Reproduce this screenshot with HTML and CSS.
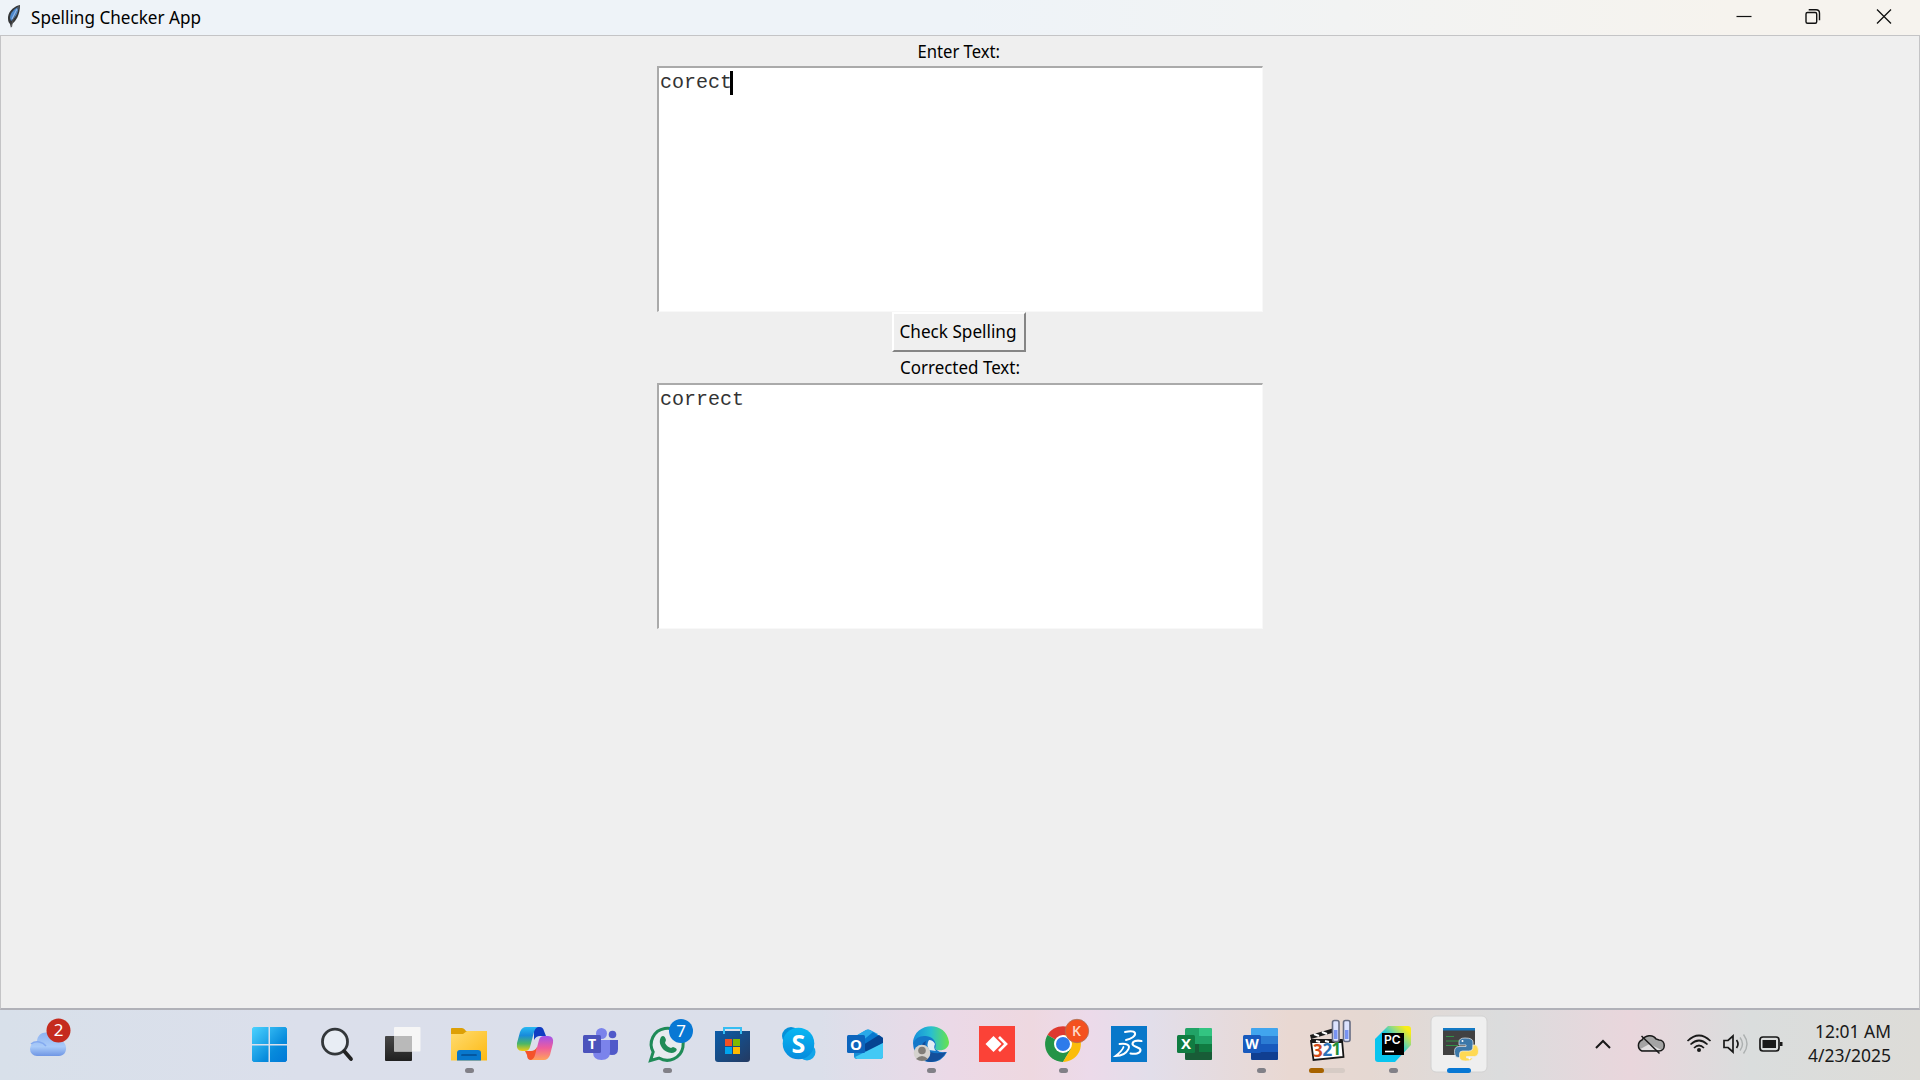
FILE: index.html
```html
<!DOCTYPE html>
<html lang="en">
<head>
<meta charset="utf-8">
<title>Spelling Checker App</title>
<link rel="stylesheet" href="styles.css">
</head>
<body>
<header class="titlebar">
  <svg class="feather" width="16" height="26" viewBox="0 0 16 26"><path d="M13 1C8 2 2 6 1 13c0 3 0 5 2 7l1 4 1-4c4-3 8-9 8-19z" fill="#343638"/><path d="M11.500 3C7 5 3 9 3 14l1 3c4-3 7-7 7.500-14z" fill="#4d88cb"/><path d="M12 2C8 9 6 14 4.500 23" stroke="#555" fill="none"/><path d="M10 5L5 15" stroke="#8fbaf0" stroke-width="1.300"/></svg>
  <svg class="title" width="176" height="35"><text x="2" y="24" textLength="170" lengthAdjust="spacingAndGlyphs">Spelling Checker App</text></svg>
  <div class="controls">
    <svg width="70" height="35" viewBox="0 0 70 35"><path d="M26.500 16.500h15" stroke="#111" stroke-width="1.200"/></svg>
    <svg width="70" height="35" viewBox="0 0 70 35" fill="none" stroke="#111" stroke-width="1.400"><rect x="26" y="12.500" width="10.700" height="10.700" rx="1.500"/><path d="M28.700 9.700h7.300q3.500 0 3.500 3.500v7"/></svg>
    <svg width="70" height="35" viewBox="0 0 70 35"><path d="M27 9.500l14 14M41 9.500l-14 14" stroke="#111" stroke-width="1.300"/></svg>
  </div>
</header>
<main class="window">
  <svg class="label label-top" width="160" height="30"><text x="37.500" y="21.500" textLength="82.500" lengthAdjust="spacingAndGlyphs">Enter Text:</text></svg>
  <div class="textbox"><span>corect</span><i class="caret"></i></div>
  <div class="button"><svg width="129" height="36"><text x="5.500" y="24" textLength="117" lengthAdjust="spacingAndGlyphs">Check Spelling</text></svg></div>
  <svg class="label label-result" width="160" height="31"><text x="20" y="22" textLength="120" lengthAdjust="spacingAndGlyphs">Corrected Text:</text></svg>
  <div class="textbox"><span>correct</span></div>
</main>
<footer class="taskbar">
  <svg class="weather" width="236" height="70" viewBox="0 0 236 70">
    <defs><linearGradient id="cl" x2="0" y2="1"><stop stop-color="#8fb4f1"/><stop offset=".6" stop-color="#a9cbf9"/><stop offset="1" stop-color="#6f96e4"/></linearGradient></defs>
    <path d="M37 46a7 7 0 0 1 0-14C37 21 50 20 54 27l5 3c9.500 1 9.500 16 0 16z" fill="url(#cl)"/><path d="M31 34c5-4 12-2 15 2" stroke="#84aaf0" stroke-width="1.500" fill="none"/>
    <circle cx="58.500" cy="20.500" r="12" fill="#c52b1e"/><text x="58.500" y="26.300" class="badge">2</text>
  </svg>
  <nav class="apps">
    <svg viewBox="0 0 66 70"><defs><linearGradient id="w" gradientUnits="userSpaceOnUse" x1="16" y1="17" x2="51" y2="52"><stop stop-color="#4bd3ff"/><stop offset=".65" stop-color="#078bdc"/><stop offset="1" stop-color="#0078d7"/></linearGradient></defs><path d="M17.500 17H32.500V34H16V18.500zM34 17H49.500L51 18.500V34H34zM16 35.500H32.500V52H17.500L16 50.500zM34 35.500H51V50.500L49.500 52H34z" fill="url(#w)"/></svg>
    <svg viewBox="0 0 66 70"><circle cx="33" cy="31.700" r="12.500" fill="#e8edf4" stroke="#33373a" stroke-width="2.800"/><path d="M42.500 41.500L49 49" stroke="#222" stroke-width="3.800" stroke-linecap="round"/></svg>
    <svg viewBox="0 0 66 70"><defs><linearGradient id="tv" x2="0" y2="1"><stop stop-color="#474747"/><stop offset="1" stop-color="#202020"/></linearGradient></defs><rect x="17" y="26" width="27" height="25" rx="1" fill="url(#tv)"/><rect x="26" y="17" width="26.500" height="24.500" rx="1" fill="#f6f6f6"/><path d="M26 26h18v15.500H26z" fill="#b9b9b9"/></svg>
    <svg viewBox="0 0 66 70"><defs><linearGradient id="f" x2="1" y2="1"><stop stop-color="#ffdc70"/><stop offset="1" stop-color="#fdb912"/></linearGradient></defs><path d="M17 19q0-1 1-1h10q2 0 4 3h20v8H17z" fill="#dda006"/><path d="M17 24h12l4-3h20v29.500H17z" fill="url(#f)"/><path d="M23 50.500V43q0-3 3-3h18q3 0 3 3v7.500z" fill="#0878cd"/><path d="M28 45h14" stroke="#034c91" stroke-width="1.700" stroke-linecap="round"/><rect x="31" y="58" width="9" height="5" rx="2.500" class="dot"/></svg>
    <svg viewBox="0 0 66 70"><defs><linearGradient id="c1" x2="0" y2="1"><stop stop-color="#28b9f3"/><stop offset=".35" stop-color="#188bdb"/><stop offset=".7" stop-color="#4db765"/><stop offset="1" stop-color="#f2cb12"/></linearGradient><linearGradient id="c2" x2="0" y2="1"><stop stop-color="#a153ec"/><stop offset=".5" stop-color="#ef5d9b"/><stop offset="1" stop-color="#ffa35b"/></linearGradient></defs><path d="M34 17h6q3 0 4 4l2 5h-6q-4 0-6 4z" fill="#103dc2"/><path d="M36 50h-5q-4 0-4-5l-2-4h6q4 0 6-4z" fill="#f4532b"/><path d="M26 17h12q-3 1-4 5l-4 15q-1 4-5 4h-3q-6 0-5-8l3-11q2-5 6-5z" fill="url(#c1)"/><path d="M44 50H31q3-1 4-5l4-15q1-4 5-4h4q6 0 5 7l-3 12q-2 5-6 5z" fill="url(#c2)"/></svg>
    <svg viewBox="0 0 66 70"><circle cx="46.500" cy="24.500" r="3.800" fill="#5059c9"/><path d="M40 30h12v9q0 6-6 6t-6-6z" fill="#5059c9"/><circle cx="35.500" cy="23.500" r="5.500" fill="#7b83eb"/><path d="M27 30h17v12q0 8-8.500 8T27 42z" fill="#7b83eb"/><rect x="17" y="25" width="18" height="18" rx="1.500" fill="#4b53bc"/><text x="26" y="39" class="mark teams">T</text></svg>
    <svg viewBox="0 0 66 70"><path d="M18.500 50.500l2.700-8.500A16 16 0 1 1 27 48z" fill="#e7ebef" stroke="#1f8b57" stroke-width="3"/><path d="M29 27c2-2 4-1 5 3l-1 3q2 4 6 5l2-1c4 1 5 3 2 5-7 4-19-6-14-15z" fill="#1f8b57"/><circle cx="49" cy="21" r="12" fill="#0878d4"/><text x="49" y="27" class="badge">7</text><rect x="31" y="58" width="9" height="5" rx="2.500" class="dot"/></svg>
    <svg viewBox="0 0 66 70"><defs><linearGradient id="st" x2="1" y2="1"><stop stop-color="#0b5ca8"/><stop offset="1" stop-color="#243a61"/></linearGradient></defs><path d="M17 21h35v28q0 3-3 3H20q-3 0-3-3z" fill="url(#st)"/><path d="M26 24v-6h17v6" fill="none" stroke="#35bdf2" stroke-width="2"/><path d="M27 29h7v7h-7z" fill="#f25022"/><path d="M35 29h7v7h-7z" fill="#7fba00"/><path d="M27 37h7v7h-7z" fill="#00a4ef"/><path d="M35 37h7v7h-7z" fill="#ffb900"/></svg>
    <svg viewBox="0 0 66 70"><defs><linearGradient id="sk" x2="0" y2="1"><stop stop-color="#09b7f2"/><stop offset="1" stop-color="#078bdd"/></linearGradient></defs><circle cx="27" cy="26" r="9" fill="#0790d8"/><circle cx="43" cy="42" r="8.500" fill="#13a5e9"/><circle cx="34.500" cy="33.500" r="15.800" fill="url(#sk)"/><text x="34.500" y="42.500" class="mark skype">S</text></svg>
    <svg viewBox="0 0 66 70"><path d="M24 27l12-7q2-1 4 0l13 8v18q0 3-3 3H27q-3 0-3-3z" fill="#168fd7"/><path d="M24 27l12-7q2-1 4 0l8 4-24 12z" fill="#29a9e9"/><path d="M31 32l12-10 6 4-14 10z" fill="#0877ce"/><path d="M33 35l16-10 4 3v5l-17 10z" fill="#064492"/><path d="M53 33v13q0 3-3 3H27l-2-2z" fill="#42c9f5"/><rect x="17" y="25" width="18" height="18" rx="1.500" fill="#0c65bd"/><text x="26" y="39.500" class="mark outlook">O</text></svg>
    <svg viewBox="0 0 66 70"><defs><linearGradient id="e" x2="1"><stop stop-color="#168edb"/><stop offset=".5" stop-color="#29bfd0"/><stop offset="1" stop-color="#67e34c"/></linearGradient></defs><path d="M17 33q1-8 13-8 11 1 10 9-2 10 11 8-5 10-16 10-17 0-18-19z" fill="#1477c9"/><path d="M30 31c-3 8 4 15 20 11-4 8-13 12-20 9-8-5-8-16 0-20z" fill="#134f9b"/><path d="M17 33C18 12 50 10 53 32c0 8-9 10-14 7 2-3 1-12-9-13q-9-1-13 7z" fill="url(#e)"/><path d="M33 30q4 0 6 4-2 4 1 7l-7-1q-3-6 0-10z" fill="#e3edf5"/><circle cx="26" cy="43" r="8.300" fill="#d5d2ce"/><circle cx="26" cy="40.500" r="3.800" fill="#817d78"/><path d="M20 49q6-6 12 0-6 4-12 0" fill="#817d78"/><rect x="31" y="58" width="9" height="5" rx="2.500" class="dot"/></svg>
    <svg viewBox="0 0 66 70"><path d="M17 16h36v36H17z" fill="#fb4237"/><path d="M23.500 34l8-8 8 8-8 8z" fill="#fff"/><path d="M37 27l7 7-7 7" fill="none" stroke="#fff" stroke-width="2.700"/></svg>
    <svg viewBox="0 0 66 70"><path d="M35 34L19.500 25A18 18 0 0 1 50.500 25z" fill="#df392f"/><path d="M35 34L19.500 25A18 18 0 0 0 35 52l8-13z" fill="#249447"/><path d="M35 34l8 4.500L35 52A18 18 0 0 0 50.500 25H35z" fill="#fbbd0a"/><circle cx="35" cy="34" r="9" fill="#fff"/><circle cx="35" cy="34" r="7" fill="#2e7bea"/><circle cx="49" cy="21" r="11.700" fill="#f4511e" stroke="#a87258" stroke-width=".8"/><text x="48.500" y="26" class="mark profile">K</text><rect x="31" y="58" width="9" height="5" rx="2.500" class="dot"/></svg>
    <svg viewBox="0 0 66 70"><path d="M17 16h36v36H17z" fill="#0878ca"/><path d="M31 22c5-1 9-1 10 1 1 3-4 6-9 7" fill="none" stroke="#fff" stroke-width="2" stroke-linecap="round"/><path d="M25.500 34c7-1 11 1 9 5-2 4-7 7-13 7 4-3 7-6 8-9" fill="none" stroke="#fff" stroke-width="1.800" stroke-linecap="round"/><path d="M47.500 31c-5-1-9 0-9 3s8 3 8 6c0 4-6 4-10 3.500" fill="none" stroke="#fff" stroke-width="2.100" stroke-linecap="round"/></svg>
    <svg viewBox="0 0 66 70"><rect x="25" y="18" width="27" height="32" rx="1.500" fill="#21a366"/><path d="M39 18h11.500q1.500 0 1.500 1.500V26H39z" fill="#33c481"/><path d="M25 34h27v8H25z" fill="#107c41"/><path d="M25 42h27v6.500q0 1.500-1.500 1.500h-24Q25 50 25 48z" fill="#185c37"/><path d="M25 34h14v8H25z" fill="#185c37"/><rect x="17" y="25" width="18" height="18" rx="1.500" fill="#107c41"/><text x="26" y="39" class="mark">X</text></svg>
    <svg viewBox="0 0 66 70"><rect x="25" y="18" width="27" height="32" rx="1.500" fill="#2b7cd3"/><path d="M25 26v-6.500q0-1.500 1.500-1.500h24q1.500 0 1.500 1.500V26z" fill="#41a5ee"/><path d="M25 34h27v8H25z" fill="#185abd"/><path d="M25 42h27v6.500q0 1.500-1.500 1.500h-24Q25 50 25 48z" fill="#103f91"/><rect x="17" y="25" width="18" height="18" rx="1.500" fill="#185abd"/><text x="26" y="39" class="mark word">W</text><rect x="31" y="58" width="9" height="5" rx="2.500" class="dot"/></svg>
    <svg viewBox="0 0 66 70"><path d="M19 31l31-1 1.500 17-30 3z" fill="#fff" stroke="#161616" stroke-width="1.800"/><path d="M18 25l28-8 1 4-28 8zM19 29h31v4H19z" fill="#191919"/><path d="M22 24l5 2M30 22l5 2M24 31l4 1M33 31l4 1M42 31l4 1" stroke="#fff" stroke-width="2.300"/><text x="21" y="46.500" class="count" fill="#d34a18">3</text><text x="30.500" y="46" class="count" fill="#2b72b8">2</text><text x="39.500" y="45" class="count" fill="#219037">1</text><g fill="#dce3ff" stroke="#666c82" stroke-width="1.600"><rect x="40.500" y="10.500" width="6.500" height="21" rx="2"/><rect x="51.500" y="10.500" width="6.500" height="21" rx="2"/></g><path d="M43.700 20v9M54.700 20v9" stroke="#7893f2" stroke-width="3.500"/><rect x="17" y="58" width="36" height="5" rx="2.500" fill="#d6cbc5"/><rect x="17" y="58" width="15" height="5" rx="2.500" fill="#a76300"/></svg>
    <svg viewBox="0 0 66 70"><defs><linearGradient id="pc" x1="0" y1="1" x2="1" y2="0"><stop offset=".5" stop-color="#08c5ef"/><stop offset=".72" stop-color="#94db80"/><stop offset=".9" stop-color="#f9ed17"/></linearGradient></defs><path d="M30 16h20q3 0 3 3v16L37 52H20q-3 0-3-3V29z" fill="url(#pc)"/><path d="M24 23h22v22H24z"/><text x="26" y="34" class="pycharm">PC</text><path d="M27 41.500h9" stroke="#fff" stroke-width="1.600"/><rect x="31" y="58" width="9" height="5" rx="2.500" class="dot"/></svg>
    <svg viewBox="0 0 66 70"><rect x="7" y="6" width="56" height="56" rx="5" fill="#efefef" stroke="#d2d2d2"/><path d="M19 18h32v27H19z" fill="#414141"/><path d="M19 18h32v2.500H19z" fill="#1379c4"/><path d="M22 26.500h8M22 31h14M22 35.500h12" stroke="#339347"/><g transform="translate(.5 0)"><path d="M40.500 28q-6 0-6 4v3h7v1.500h-7q-4.500 0-4.500 5 0 6 4 6h2.500v-3q0-3 3-3h6q3 0 3-3V32q0-4-8-4z" fill="#3c78a9" stroke="#eee" stroke-width=".7"/><path d="M41 51q-6 0-6-4v-3q0-3 3-3h6q4.500 0 4.500-4v-2H51q3 1 3 6t-4 5.500h-8V48h6q0 3-7 3z" fill="#ffd952" stroke="#eee" stroke-width=".7"/><circle cx="38" cy="31" r="1" fill="#fff"/><circle cx="45" cy="48.500" r="1" fill="#fff"/></g><rect x="23" y="58" width="24" height="5" rx="2.500" fill="#0878d4"/></svg>
  </nav>
  <svg class="tray" width="220" height="70" viewBox="0 0 220 70" fill="none" stroke="#191919" stroke-width="1.700">
    <path d="M26 38l7-7 7 7" stroke-width="2"/>
    <g transform="translate(-3.500 0)"><path d="M75.500 41a6 6 0 0 1 0-11c3-5 11-6 14-1l3 1c7 0 7 11 0 11z" fill="#a4a4a4" stroke="none"/><path d="M72 40l11-6 12 6z" fill="#e1dfe0" stroke="none"/><path d="M75.500 41a6 6 0 0 1 0-11c3-5 11-6 14-1l3 1c7 0 7 11 0 11z" stroke-width="1.500"/><path d="M75 26l18 17.500" stroke-width="1.500"/></g>
    <path d="M117.500 31q11.500-11 23 0M120.500 34.500q8.500-8 17 0M124 38q5-5 10 0"/><circle cx="129" cy="40" r="2" fill="#191919" stroke="none"/>
    <path d="M154 30.500h4l5-4.500v16l-5-4.500h-4zM166.500 30q3 4 0 8"/><path d="M170 27.500q5 6.500 0 13M173.500 24.500q7 9.500 0 19" stroke="#acb0b0" stroke-width="1.400"/>
    <rect x="190" y="27" width="19" height="14" rx="3"/><path d="M192.500 30h13.500v8H192.500zM210 32h2.500v4H210z" fill="#191919" stroke="none"/>
  </svg>
  <svg class="clock" width="130" height="70"><text x="25" y="28" textLength="76" lengthAdjust="spacingAndGlyphs">12:01 AM</text><text x="18" y="52" textLength="83" lengthAdjust="spacingAndGlyphs">4/23/2025</text></svg>
</footer>
</body>
</html>
```
FILE: styles.css
```css
* { box-sizing: border-box; }
body {
  margin: 0;
  width: 1920px;
  height: 1080px;
  overflow: hidden;
  display: flex;
  flex-direction: column;
  font-family: "Noto Sans", sans-serif;
  color: #111;
}
svg { display: block; flex: none; }
.titlebar {
  height: 35px;
  display: flex;
  padding-left: 7px;
  background: linear-gradient(90deg, #eef3f8, #eef3f8 50%, #f6f3ee 90%);
}
.feather { margin-top: 4px; }
.title { margin-left: 6px; font-size: 17.5px; }
.controls { margin-left: auto; display: flex; }
.window {
  height: 975px;
  display: flex;
  flex-direction: column;
  align-items: center;
  background: #efefef;
  border: 1px solid #c4c4c6;
  border-bottom: 2px solid #b0b1b8;
}
.label, .button { font-size: 18.5px; }
.textbox {
  width: 606px;
  height: 246px;
  flex: none;
  display: flex;
  background: #fff;
  border: solid;
  border-width: 2px 1px 1px 2px;
  border-color: #aaa #f8f8f8 #f8f8f8 #aaa;
  padding: 3px 0 0 1px;
  font: 20px/24px "Liberation Mono", monospace;
  color: #333;
}
.caret { width: 3px; height: 24px; margin-left: -2px; background: #000; }
.button {
  width: 134px;
  height: 40px;
  flex: none;
  border: 2px solid;
  border-color: #fff #858585 #858585 #fff;
  margin-left: -3px;
}
.taskbar {
  height: 70px;
  display: flex;
  background: linear-gradient(90deg, #d8e0ea 0, #dbdfeb 300px, #dbdfea 820px, #ebd9e7 950px, #eed8e0 1030px, #ecdaea 1090px, #e2deea 1150px, #e9d8d2 1290px, #e5d8d2 1370px, #dbdcdd 1500px, #e9d6dc 1630px, #dadddd 1750px, #dddcd8 1920px);
}
.apps { display: flex; }
.apps svg { width: 66px; height: 70px; }
.tray { margin-left: 80px; }
.clock { font-size: 17.5px; fill: #191919; }
.badge { font-size: 17px; fill: #fff; text-anchor: middle; }
.dot { fill: #818087; }
.mark { font: bold 15px "Open Sans", sans-serif; fill: #fff; text-anchor: middle; }
.word { font-size: 14px; }
.teams { font-size: 14px; }
.skype { font-size: 25px; }
.outlook { font-size: 15px; }
.profile { font-size: 14px; fill: #ffd9c8; font-weight: 600; }
.count { font: bold 17px "Open Sans", sans-serif; }
.pycharm { font: 600 12px Inter, sans-serif; fill: #fff; }
```
